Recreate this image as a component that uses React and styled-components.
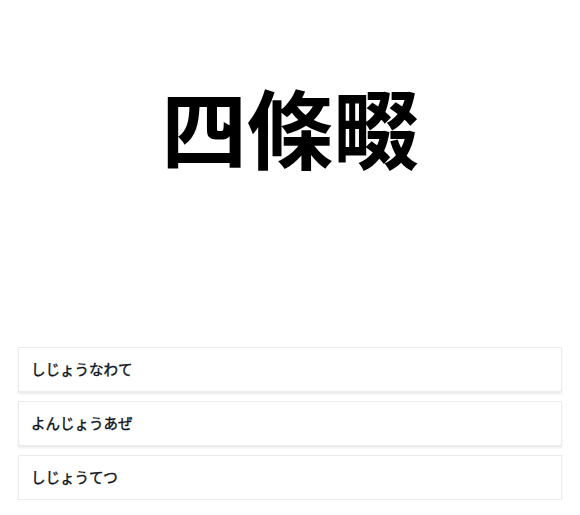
import React from 'react';
import styled, { createGlobalStyle } from 'styled-components';

const GlobalStyle = createGlobalStyle`
  body {
    margin: 0;
    background: #fff;
    font-family: "Noto Sans CJK JP", "Noto Sans", sans-serif;
  }
`;

const items = [
  { id: 1, label: 'しじょうなわて' },
  { id: 2, label: 'よんじょうあぜ' },
  { id: 3, label: 'しじょうてつ' },
];

function App() {
  return (
    <>
      <GlobalStyle />
      <Page>
        <Hero>
          <Title>四條畷</Title>
        </Hero>
        <List>
          {items.map(({ id, label }) => (
            <Card key={id}>{label}</Card>
          ))}
        </List>
      </Page>
    </>
  );
}

const Page = styled.main`
  padding: 0 18px;
`;

const Hero = styled.section`
  height: 347px;
  display: flex;
  justify-content: center;
  padding-top: 74px;
  box-sizing: border-box;
`;

const Title = styled.h1`
  margin: 0;
  font-size: 86px;
  line-height: 1.2;
  font-weight: 700;
  color: #000;
`;

const List = styled.div`
  display: flex;
  flex-direction: column;
  gap: 9px;
`;

const Card = styled.div`
  height: 45px;
  box-sizing: border-box;
  display: flex;
  align-items: center;
  padding: 0 12px 3px;
  border: 1px solid #ececec;
  box-shadow: 0 2px 2px rgba(0, 0, 0, 0.08);
  font-family: "Noto Sans CJK JP", sans-serif;
  font-size: 14.5px;
  font-weight: 400;
  color: #0d1420;
  -webkit-text-stroke: 0.4px #0d1420;
`;

export default App;
